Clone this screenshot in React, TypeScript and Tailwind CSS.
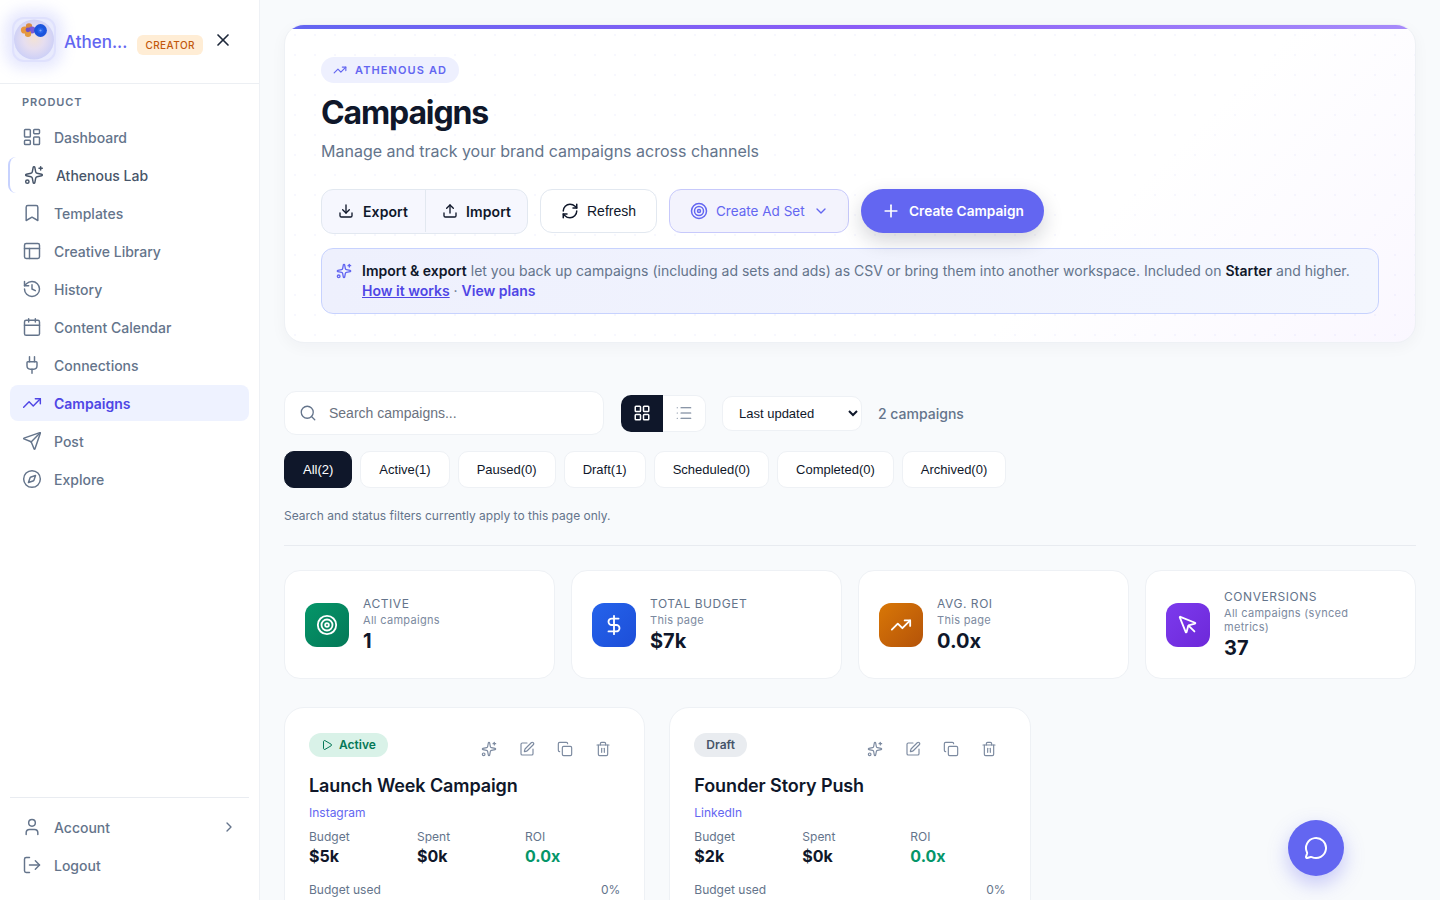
import React from "react";
import {
  LayoutDashboard, Sparkles, Bookmark, PanelsTopLeft, History, Calendar, Plug, TrendingUp, Send, Compass,
  User, LogOut, ChevronRight, X, Download, Upload, RefreshCw, Target, ChevronDown, Plus, Search, LayoutGrid,
  List, DollarSign, MousePointer, Play, SquarePen, Copy, Trash2, MessageCircle,
} from "lucide-react";

const nav = [
  { label: "Dashboard", Icon: LayoutDashboard },
  { label: "Athenous Lab", Icon: Sparkles, lab: true },
  { label: "Templates", Icon: Bookmark },
  { label: "Creative Library", Icon: PanelsTopLeft },
  { label: "History", Icon: History },
  { label: "Content Calendar", Icon: Calendar },
  { label: "Connections", Icon: Plug },
  { label: "Campaigns", Icon: TrendingUp, active: true },
  { label: "Post", Icon: Send },
  { label: "Explore", Icon: Compass },
];

function Logo() {
  return (
    <div className="relative h-[45px] w-[44px] shrink-0 rounded-xl border-2 border-[#dfe1fd] bg-[#e9ebfd] shadow-[0_0_14px_7px_rgba(129,140,248,0.2)]">
      <svg viewBox="0 0 44 45" className="absolute -left-[2px] -top-[2px] h-[45px] w-[44px]">
        <defs>
          <radialGradient id="ball" cx="50%" cy="48%" r="52%">
            <stop offset="0%" stopColor="#f3e2d6" />
            <stop offset="50%" stopColor="#e6def0" />
            <stop offset="100%" stopColor="#cdd0f7" />
          </radialGradient>
          <filter id="soft"><feGaussianBlur stdDeviation="0.5" /></filter>
        </defs>
        <circle cx="22" cy="22.5" r="20" fill="url(#ball)" />
        <g filter="url(#soft)">
          <circle cx="12.5" cy="13" r="3.6" fill="#e8963c" />
          <circle cx="17" cy="9.5" r="3.2" fill="#d98b45" />
          <circle cx="20" cy="13" r="3.4" fill="#7a5bd6" />
          <circle cx="16" cy="16.8" r="3.2" fill="#e39a3f" />
          <circle cx="16" cy="12.8" r="2.4" fill="#7250c8" />
          <circle cx="23.5" cy="13.5" r="0.8" fill="#5b4a78" />
          <circle cx="28.5" cy="13.5" r="6.4" fill="#1d55dc" />
          <circle cx="28.5" cy="13.5" r="3" fill="#2563eb" />
          <circle cx="28.5" cy="13.5" r="1.1" fill="#7ea6f7" />
        </g>
      </svg>
    </div>
  );
}

function Sidebar() {
  return (
    <aside className="flex h-screen w-[260px] shrink-0 flex-col border-r border-[#eef1f5] bg-white">
      <div className="flex h-[84px] shrink-0 items-center border-b border-[#eceff3] pb-1 pl-3 pr-4">
        <Logo />
        <span className="ml-2 mt-1 text-[17px] font-medium leading-6 text-[#6366f1]">Athen...</span>
        <span className="ml-[10px] mt-[10px] rounded-md bg-[#ffedd5] px-2 py-[3px] text-[10px] font-medium leading-[14px] tracking-[0.45px] text-[#c2570c]">CREATOR</span>
        <X className="ml-[10px] h-5 w-5 text-[#1e293b]" strokeWidth={2} />
      </div>
      <div className="px-[22px] pb-[9px] pt-[10px] text-[11px] font-semibold leading-4 tracking-[0.9px] text-[#64748b]">PRODUCT</div>
      <nav className="flex flex-col gap-[2px] pl-[10px] pr-[10px]">
        {nav.map(({ label, Icon, active, lab }) => (
          <div
            key={label}
            className={
              active
                ? "flex h-9 items-center gap-[12px] rounded-lg bg-[#eef2ff] px-3 text-[14px] font-semibold text-[#4f46e5]"
                : lab
                  ? "-ml-[2px] flex h-9 items-center gap-[12px] rounded-lg border-l-2 border-[#c7d2fe] px-[14px] text-[14px] font-medium text-[#475569]"
                  : "flex h-9 items-center gap-[12px] rounded-lg px-3 text-[14px] font-medium text-[#64748b]"
            }
          >
            <Icon className="h-5 w-5 shrink-0" strokeWidth={1.75} />
            <span>{label}</span>
          </div>
        ))}
      </nav>
      <div className="mt-auto px-[10px] pb-[17px]">
        <div className="mb-[11px] border-t border-[#e9ecf1]" />
        <div className="flex h-9 items-center gap-3 px-3 text-[14px] font-medium text-[#64748b]">
          <User className="h-5 w-5" strokeWidth={1.75} />
          <span>Account</span>
          <ChevronRight className="ml-auto h-4 w-4" strokeWidth={2} />
        </div>
        <div className="mt-[2px] flex h-9 items-center gap-3 px-3 text-[14px] font-medium text-[#64748b]">
          <LogOut className="h-5 w-5" strokeWidth={1.75} />
          <span>Logout</span>
        </div>
      </div>
    </aside>
  );
}

function Hero() {
  return (
    <section className="relative overflow-hidden rounded-[20px] border border-[#eef1f5] bg-white bg-[radial-gradient(rgba(99,102,241,0.05)_1px,transparent_1px),linear-gradient(135deg,#ffffff_70%,#faf7ff_100%)] bg-[length:20px_20px,100%_100%] shadow-[0_4px_16px_rgba(15,23,42,0.04)]">
      <div className="h-1 bg-gradient-to-r from-[#6366f1] via-[#8b5cf6] to-[#a78bfa]" />
      <div className="px-9 pb-7 pt-7">
        <div className="flex h-[26px] w-fit items-center gap-2 rounded-full bg-[#eef0fe] px-3 text-[11px] font-semibold tracking-[1.1px] text-[#6366f1]">
          <TrendingUp className="h-[14px] w-[14px]" strokeWidth={2} />
          ATHENOUS AD
        </div>
        <h1 className="mt-[10px] text-[32px] font-bold leading-[40px] tracking-[-1.13px] text-[#0f172a]">Campaigns</h1>
        <p className="mt-[6px] text-[16px] leading-6 text-[#64748b]">Manage and track your brand campaigns across channels</p>
        <div className="mt-[26px] flex items-start gap-3">
          <div className="flex h-[45px] rounded-xl border border-[#e2e8f0] bg-[#f6f7fe] pb-px text-[14px] font-semibold tracking-[0.1px] text-[#0f172a]">
            <div className="flex w-[104px] items-center gap-2 border-r border-[#e2e8f0] pl-[17px]"><Download className="h-4 w-4 -translate-x-px" strokeWidth={2} />Export</div>
            <div className="flex w-[101px] items-center gap-[7px] pl-[17px]"><Upload className="h-4 w-4 -translate-x-px" strokeWidth={2} />Import</div>
          </div>
          <div className="flex h-[44px] w-[117px] items-center gap-2 rounded-xl border border-[#e2e8f0] bg-white pl-5 font-['Liberation_Sans',sans-serif] text-[14px] text-[#0f172a]">
            <RefreshCw className="h-[18px] w-[18px]" strokeWidth={2} />Refresh
          </div>
          <div className="flex h-[44px] w-[180px] items-center gap-2 rounded-xl border border-[#c7c9fb] bg-[#f3f3fd] pl-5 text-[13.5px] text-[#6366f1]">
            <Target className="h-[18px] w-[18px]" strokeWidth={2} />Create Ad Set
            <ChevronDown className="h-4 w-4" strokeWidth={2} />
          </div>
          <div className="flex h-[44px] w-[183px] items-center gap-2 rounded-full bg-[#6366f1] pl-5 text-[13.7px] font-semibold text-white shadow-[0_8px_20px_rgba(15,23,42,0.18)]">
            <Plus className="h-5 w-5" strokeWidth={2} />Create Campaign
          </div>
        </div>
        <div className="mt-[14px] flex gap-[10px] rounded-xl border border-[#c7d2fe] bg-gradient-to-r from-[#eef0fd] to-[#f3f6fe] px-[14px] py-[12px] text-[14px] leading-5 text-[#64748b]">
          <Sparkles className="mt-[2px] h-4 w-4 shrink-0 text-[#6366f1]" strokeWidth={2} />
          <p>
            <span className="font-semibold text-[#0f172a]">Import &amp; export</span> let you back up campaigns (including ad sets and ads) as CSV or bring them into another workspace. Included on <span className="font-semibold text-[#0f172a]">Starter</span> and higher.
            <br />
            <span className="font-semibold text-[#4f46e5] underline">How it works</span> · <span className="font-semibold text-[#4f46e5]">View plans</span>
          </p>
        </div>
      </div>
    </section>
  );
}

const filters = ["All(2)", "Active(1)", "Paused(0)", "Draft(1)", "Scheduled(0)", "Completed(0)", "Archived(0)"];

function Toolbar() {
  return (
    <div className="mt-12">
      <div className="flex items-center">
        <div className="flex h-11 w-[320px] items-center gap-[12px] rounded-xl border border-[#eef1f5] bg-white px-[15px] font-['Liberation_Sans',sans-serif] text-[14px] text-[#6b7280]">
          <Search className="h-[18px] w-[18px] -translate-x-px text-[#64748b]" strokeWidth={1.75} />
          <span className="-ml-px">Search campaigns...</span>
        </div>
        <div className="ml-[17px] flex h-[37px] w-[85px]">
          <div className="flex w-[42px] items-center justify-center rounded-l-[10px] bg-[#0f172a] text-white"><LayoutGrid className="h-[18px] w-[18px]" strokeWidth={2} /></div>
          <div className="flex flex-1 items-center justify-center rounded-r-[10px] border border-l-0 border-[#eef1f5] bg-white text-[#64748b]"><List className="h-[18px] w-[18px]" strokeWidth={1.5} /></div>
        </div>
        <select className="ml-4 h-[35px] w-[140px] rounded-[10px] border border-[#eef1f5] bg-white px-3 font-['Liberation_Sans',sans-serif] text-[13px] text-[#0f172a]">
          <option>Last updated</option>
        </select>
        <span className="ml-4 text-[14px] font-medium text-[#64748b]">2 campaigns</span>
      </div>
      <div className="mt-4 flex gap-2 font-['Liberation_Sans',sans-serif]">
        {filters.map((f, i) => (
          <div
            key={f}
            className={
              i === 0
                ? "flex h-[37px] items-center rounded-[10px] border border-[#0f172a] bg-[#0f172a] px-[18px] text-[13px] text-white"
                : "flex h-[37px] items-center rounded-[10px] border border-[#eef1f5] bg-white px-[18px] text-[13px] text-[#0f172a]"
            }
          >
            {f}
          </div>
        ))}
      </div>
      <p className="mt-5 text-[12px] leading-4 text-[#64748b]">Search and status filters currently apply to this page only.</p>
      <div className="mt-[21px] border-t border-[#e8ebf0]" />
    </div>
  );
}

const stats = [
  { label: "ACTIVE", sub: "All campaigns", value: "1", Icon: Target, grad: "from-[#059669] to-[#047857]" },
  { label: "TOTAL BUDGET", sub: "This page", value: "$7k", Icon: DollarSign, grad: "from-[#2563eb] to-[#1d4ed8]" },
  { label: "AVG. ROI", sub: "This page", value: "0.0x", Icon: TrendingUp, grad: "from-[#d97706] to-[#b45309]" },
  { label: "CONVERSIONS", sub: "All campaigns (synced metrics)", value: "37", Icon: MousePointer, grad: "from-[#7c3aed] to-[#6d28d9]" },
];

function Stats() {
  return (
    <div className="mt-6 grid grid-cols-4 gap-4">
      {stats.map(({ label, sub, value, Icon, grad }) => (
        <div key={label} className="flex h-[109px] items-center gap-[14px] rounded-2xl border border-[#eef1f5] bg-white px-5">
          <div className={`flex h-11 w-11 shrink-0 items-center justify-center rounded-xl bg-gradient-to-br ${grad} text-white`}>
            <Icon className="h-[22px] w-[22px]" strokeWidth={2} />
          </div>
          <div className="min-w-0 pr-8 pt-[2px]">
            <div className="text-[12px] leading-4 tracking-[0.55px] text-[#64748b]">{label}</div>
            <div className="mt-px text-[11px] leading-[14px] tracking-[0.3px] text-[#7c8aa0]">{sub}</div>
            <div className="text-[20px] font-bold leading-7 text-[#0f172a]">{value}</div>
          </div>
        </div>
      ))}
    </div>
  );
}

function CampaignCard({ title, channel, budget, status, used }: { title: string; channel: string; budget: string; status: "active" | "draft"; used: string }) {
  return (
    <div className="h-[300px] rounded-[20px] border border-[#eef1f5] bg-white px-6 pt-[25px]">
      <div className="flex items-start justify-between">
        {status === "active" ? (
          <span className="flex h-6 items-center gap-[6px] rounded-full bg-[#d9f2e8] px-3 text-[12px] font-semibold text-[#047857]">
            <Play className="h-3 w-3" strokeWidth={2} />Active
          </span>
        ) : (
          <span className="flex h-6 items-center rounded-full bg-[#e9ecf0] px-3 text-[12px] font-semibold text-[#475569]">Draft</span>
        )}
        <div className="mr-[9px] mt-[8px] flex gap-[22px] text-[#7c8aa0]">
          <Sparkles className="h-4 w-4" strokeWidth={1.75} />
          <SquarePen className="h-4 w-4" strokeWidth={1.75} />
          <Copy className="h-4 w-4" strokeWidth={1.75} />
          <Trash2 className="h-4 w-4" strokeWidth={1.75} />
        </div>
      </div>
      <h3 className="mt-[15px] text-[18px] font-semibold leading-7 tracking-[-0.1px] text-[#0f172a]">{title}</h3>
      <div className="mt-[4px] text-[12px] leading-[18px] text-[#6366f1]">{channel}</div>
      <div className="mt-[7px] grid grid-cols-[108px_108px_1fr]">
        {[["Budget", budget, "text-[#0f172a]"], ["Spent", "$0k", "text-[#0f172a]"], ["ROI", "0.0x", "text-[#059669]"]].map(([l, v, c]) => (
          <div key={l}>
            <div className="text-[12px] leading-4 text-[#64748b]">{l}</div>
            <div className={`-mt-px text-[16px] font-bold leading-6 ${c}`}>{v}</div>
          </div>
        ))}
      </div>
      <div className="mt-[14px] flex justify-between text-[12px] leading-4 text-[#64748b]">
        <span>Budget used</span>
        <span>{used}</span>
      </div>
      <div className="mt-2 h-[6px] rounded-full bg-[#eef1f5]" />
    </div>
  );
}

export default function App() {
  return (
    <div className="relative flex h-screen overflow-hidden bg-[#f8fafc] font-['Inter',sans-serif]">
      <Sidebar />
      <main className="min-w-0 flex-1 overflow-hidden px-6 pt-6">
        <Hero />
        <Toolbar />
        <Stats />
        <div className="mt-[28px] grid grid-cols-3 gap-6">
          <CampaignCard title="Launch Week Campaign" channel="Instagram" budget="$5k" status="active" used="0%" />
          <CampaignCard title="Founder Story Push" channel="LinkedIn" budget="$2k" status="draft" used="0%" />
        </div>
      </main>
      <div className="absolute bottom-6 right-24 flex h-14 w-14 items-center justify-center rounded-full bg-[#6366f1] text-white shadow-[0_8px_20px_rgba(99,102,241,0.35)]">
        <MessageCircle className="h-6 w-6" strokeWidth={2} />
      </div>
    </div>
  );
}
